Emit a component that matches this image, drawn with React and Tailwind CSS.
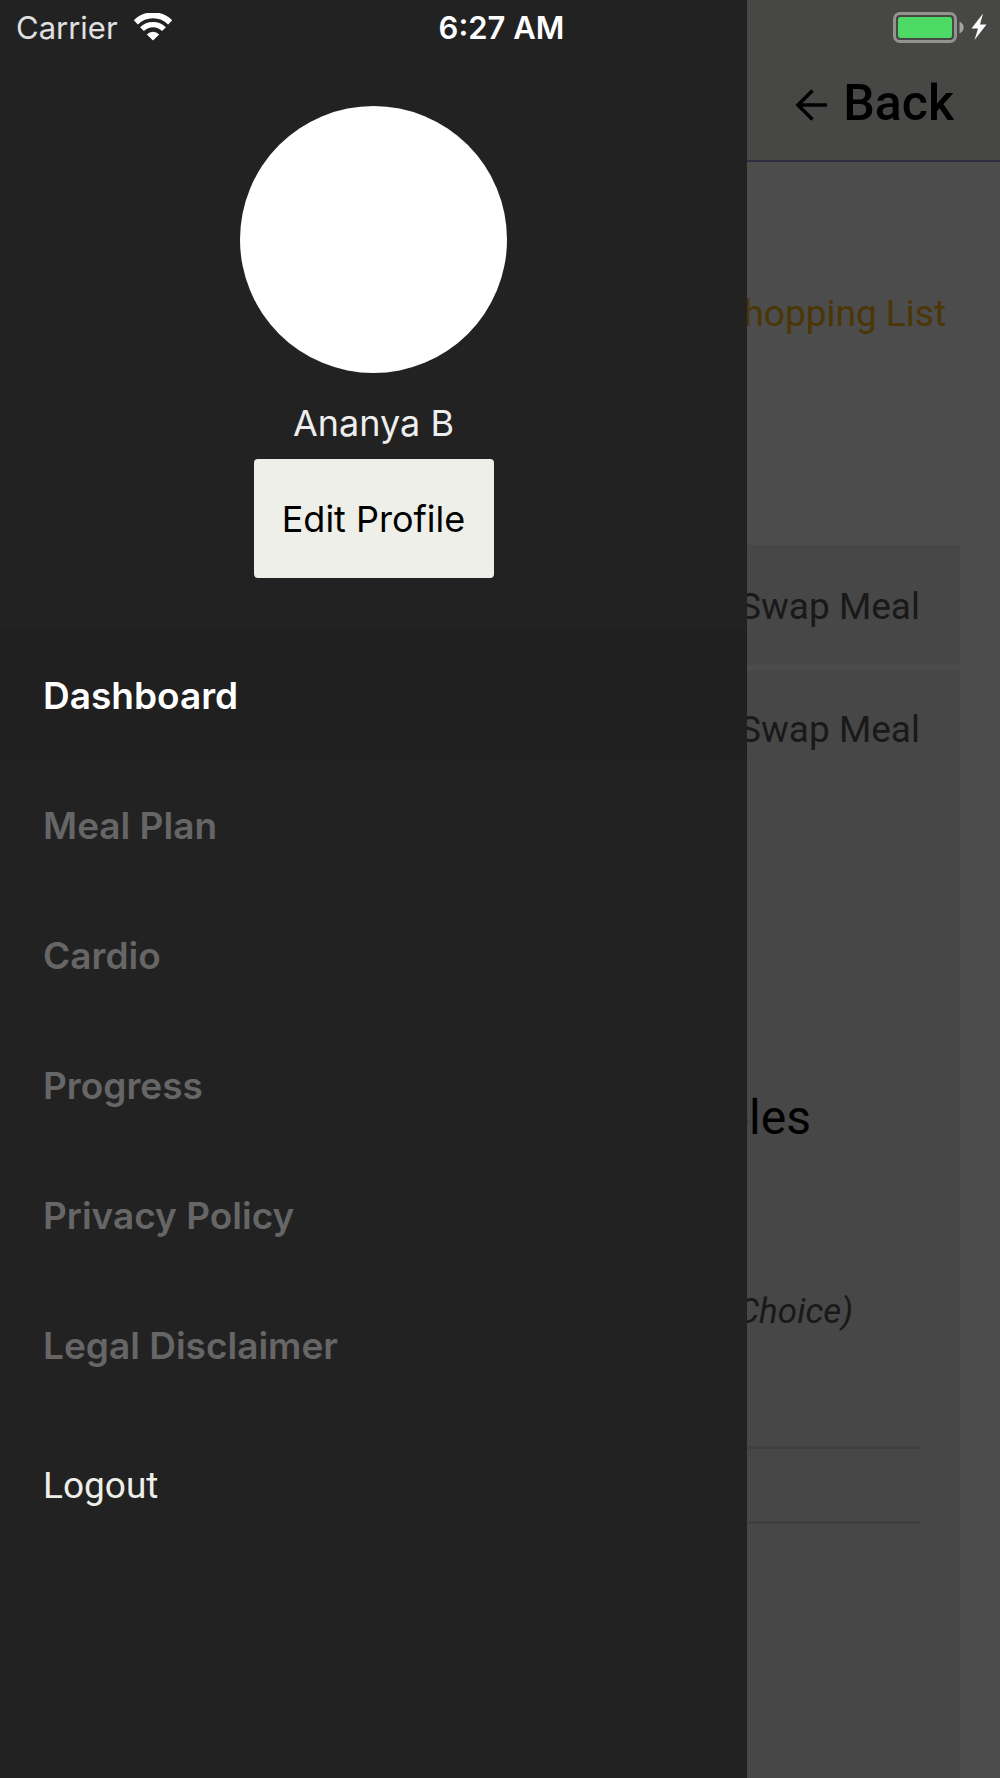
const menuItems = ['Dashboard', 'Meal Plan', 'Cardio', 'Progress', 'Privacy Policy', 'Legal Disclaimer']

function WifiIcon() {
  return (
    <svg viewBox="0 0 38 28" className="h-7 w-[38px]" fill="none" stroke="white" aria-hidden="true">
      <path d="M1.8 9.4 A24.5 24.5 0 0 1 36.2 9.4" strokeWidth="6" />
      <path d="M8 16.2 A15.5 15.5 0 0 1 30 16.2" strokeWidth="5.4" />
      <path d="M12.8 21.4 A8.5 8.5 0 0 1 25.2 21.4 L19 27.6 Z" fill="white" stroke="none" />
    </svg>
  )
}

function BatteryIcon() {
  return (
    <svg viewBox="0 0 94 31" className="h-[31px] w-[94px]" aria-hidden="true">
      <rect x="1.5" y="1.5" width="61" height="28" rx="5.5" fill="none" stroke="#93938f" strokeWidth="3" />
      <rect x="5" y="5" width="54" height="21" rx="2.5" fill="#4cd964" />
      <path d="M66.5 9.5 C72 12 72 19 66.5 21.5 Z" fill="#a3a3a0" />
      <path d="M90 1.5 L78.500 16.5 H85 L81.5 28 L93.5 12.5 H87 Z" fill="white" />
    </svg>
  )
}

function BackArrow() {
  return (
    <svg viewBox="0 0 32 32" className="mt-1 size-8" fill="none" stroke="black" strokeWidth="3.6" aria-hidden="true">
      <path d="M17.5 1.5 L3 16 L17.5 30.5 M3 16 H32" />
    </svg>
  )
}

function StatusBar() {
  return (
    <div className="z-20 col-start-1 row-start-1 grid h-[54px] grid-cols-3 items-center self-start pr-[13px] pl-4 font-['Inter',sans-serif] text-[31px] leading-none text-white">
      <div className="flex items-center gap-4">
        <span className="text-[#e0e0e0]">Carrier</span>
        <WifiIcon />
      </div>
      <span className="text-center font-semibold">6:27 AM</span>
      <div className="flex justify-end">
        <BatteryIcon />
      </div>
    </div>
  )
}

function MealPage() {
  return (
    <div className="col-start-1 row-start-1 flex flex-col bg-white font-['Roboto',sans-serif] text-[37px] leading-[48px] text-[#555]">
      <header className="flex h-[162px] items-end justify-end border-b-2 border-[#9696d5] bg-[#eeefe9] pr-[46px] pb-[25px]">
        <button type="button" className="flex items-center gap-4 text-[50px] leading-[64px] font-medium text-black">
          <BackArrow />
          Back
        </button>
      </header>
      <main className="flex grow flex-col px-10">
        <a href="#shopping" className="mt-32 self-end pr-[14px] text-[#fab417]">
          Shopping List
        </a>
        <div className="mt-[207px] flex h-[120px] items-center justify-end bg-[#ededed] pt-1 pr-10">
          <button type="button">Swap Meal</button>
        </div>
        <section className="mt-[5px] flex grow flex-col bg-[#ededed] px-10">
          <div className="flex h-[120px] items-center justify-end">
            <button type="button">Swap Meal</button>
          </div>
          <h2 className="mt-[296px] self-end pr-[109px] text-[48px] leading-[64px] text-black">Vegetables</h2>
          <p className="mt-[138px] self-end pr-[67px] text-[35px] leading-[48px] italic">(Your Choice)</p>
          <hr className="mt-[110px] border-t-3 border-[#d6d6d6]" />
          <hr className="mt-[72px] border-t-3 border-[#d6d6d6]" />
        </section>
      </main>
    </div>
  )
}

function Drawer() {
  return (
    <aside className="z-10 col-start-1 row-start-1 flex w-[74.7%] flex-col bg-[#222] pt-[106px] font-['Inter',sans-serif] text-[36px] leading-[48px]">
      <div className="flex flex-col items-center">
        <div className="size-[267px] rounded-full bg-white" />
        <p className="mt-[26px] text-[#eee]">Ananya B</p>
        <button type="button" className="mt-3 h-[119px] w-60 rounded bg-[#eeefe9] text-black">
          Edit Profile
        </button>
      </div>
      <nav className="mt-[51px] flex flex-col text-[37px] font-semibold text-[#666]">
        {menuItems.map((item, i) => (
          <a
            key={item}
            href="#menu"
            className={`flex h-[130px] items-center px-[43px] pt-1 ${i === 0 ? 'bg-[#202020] text-white' : ''}`}
          >
            {item}
          </a>
        ))}
      </nav>
      <button type="button" className="mt-[53px] self-start px-[43px] font-['Roboto',sans-serif] text-[37px] text-[#eeefe9]">
        Logout
      </button>
    </aside>
  )
}

export default function App() {
  return (
    <div className="grid min-h-screen grid-cols-1">
      <MealPage />
      <div className="col-start-1 row-start-1 bg-black/70" />
      <Drawer />
      <StatusBar />
    </div>
  )
}
